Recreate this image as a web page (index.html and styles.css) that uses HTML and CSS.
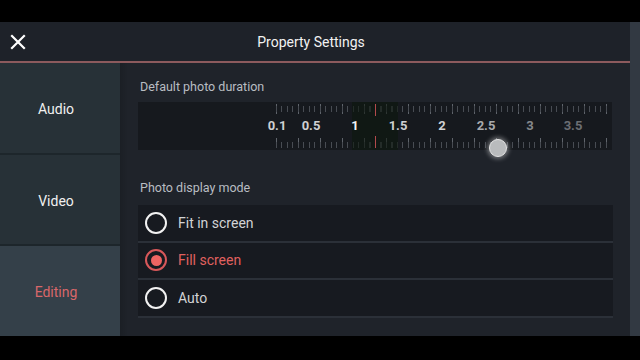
FILE: index.html
```html
<!DOCTYPE html>
<html>
<head>
<meta charset="utf-8">
<link rel="stylesheet" href="styles.css">
</head>
<body>
<div class="topbar"></div>
<div class="frame">
  <div class="panel">
    <header class="header">
      <svg class="close" width="16" height="16" viewBox="0 0 16 16"><path d="M2 2L14 14M14 2L2 14" stroke="#ffffff" stroke-width="2.2" stroke-linecap="square"/></svg>
      <div class="title">Property Settings</div>
    </header>
    <div class="body">
      <nav class="sidebar">
        <div class="tab">Audio</div>
        <div class="tab">Video</div>
        <div class="tab active">Editing</div>
      </nav>
      <main class="content">
        <div class="label">Default photo duration</div>
        <div class="ruler">
          <div class="ticks top"></div>
          <div class="ticks bottom"></div>
          <div class="hl"></div>
          <div class="center top-c"></div>
          <div class="center bot-c"></div>
          <span class="num n1" style="left:139px">0.1</span>
          <span class="num n1" style="left:173px">0.5</span>
          <span class="num n0" style="left:217px">1</span>
          <span class="num n1" style="left:260px">1.5</span>
          <span class="num n1" style="left:304px">2</span>
          <span class="num n2" style="left:348px">2.5</span>
          <span class="num n3" style="left:392px">3</span>
          <span class="num n4" style="left:435px">3.5</span>
          <div class="thumb"></div>
        </div>
        <div class="label label2">Photo display mode</div>
        <div class="options">
          <div class="opt"><span class="radio"></span><span>Fit in screen</span></div>
          <div class="opt sel"><span class="radio"></span><span>Fill screen</span></div>
          <div class="opt"><span class="radio"></span><span>Auto</span></div>
        </div>
      </main>
    </div>
  </div>
  <div class="strip"></div>
</div>
</body>
</html>
```

FILE: styles.css
```css
html, body {
  margin: 0;
  padding: 0;
  background: #000;
  width: 640px;
  height: 360px;
  overflow: hidden;
  font-family: Roboto, "Liberation Sans", sans-serif;
}
.topbar { height: 22px; background: #000; }
.frame {
  display: flex;
  height: 314px;
}
.panel {
  width: 630px;
  display: flex;
  flex-direction: column;
  background: #1f232a;
}
.strip {
  width: 10px;
  background: #323942;
}
.header {
  height: 39px;
  border-bottom: 2px solid #8c5a5d;
  background: #1e2229;
  display: flex;
  align-items: center;
  position: relative;
}
.close {
  margin-left: 10px;
  margin-top: 1px;
}
.title {
  flex: 1;
  text-align: center;
  color: #f2f2f2;
  font-size: 14px;
  padding-right: 34px;
  padding-top: 1px;
}
.body {
  flex: 1;
  display: flex;
}
.sidebar {
  width: 120px;
  display: flex;
  flex-direction: column;
  background: #1d262b;
  gap: 2px;
}
.tab {
  flex: 1 1 0;
  box-sizing: border-box;
  background: #273137;
  color: #f0f0f0;
  font-size: 14px;
  display: flex;
  align-items: center;
  justify-content: center;
  padding-right: 8px;
  padding-top: 2px;
}
.tab.active {
  background: #344049;
  color: #d8676a;
}
.content {
  flex: 1;
  padding: 16px 17px 0 18px;
  background: linear-gradient(to right, #1b1f25 0, #1f232a 8px);
}
.label {
  color: #b9bdc2;
  font-size: 12.5px;
  padding-left: 2px;
  height: 18px;
}
.ruler {
  margin-top: 5px;
  width: 474px;
  height: 48px;
  background: #16191e;
  position: relative;
}
.ticks {
  position: absolute;
  left: 138px;
  right: 2px;
  height: 10px;
  background-image: repeating-linear-gradient(to right, #5f646b 0 1px, transparent 1px 22px);
}
.ticks::before {
  content: "";
  position: absolute;
  left: 0; right: 0;
  height: 6px;
  background-image: repeating-linear-gradient(to right, #484c53 0 1px, transparent 1px 5.5px);
}
.ticks.top { top: 2px; }
.ticks.top::before { top: 2px; }
.ticks.bottom { bottom: 2px; }
.ticks.bottom::before { bottom: 0; }
.hl {
  position: absolute;
  left: 214px;
  width: 46px;
  top: 0;
  bottom: 0;
  background: rgba(14, 24, 14, 0.6);
}
.center {
  position: absolute;
  left: 237px;
  width: 1px;
  height: 12px;
  background: #b34a4c;
}
.top-c { top: 2px; }
.bot-c { bottom: 2px; }
.num {
  position: absolute;
  top: 17px;
  font-size: 13px;
  font-weight: bold;
  line-height: 14px;
  transform: translateX(-50%);
}
.n0 { color: #f4f4f4; }
.n1 { color: #cfd0d2; }
.n2 { color: #a8aaad; }
.n3 { color: #85888c; }
.n4 { color: #6b6e73; }
.thumb {
  position: absolute;
  left: 351px;
  top: 37px;
  width: 18px;
  height: 18px;
  border-radius: 50%;
  background: #b9bbbd;
  border: 1px solid #e4e4e4;
  box-sizing: border-box;
  box-shadow: 0 0 4px 2px rgba(255,255,255,0.35);
}
.label2 {
  margin-top: 30px;
  height: 18px;
}
.options {
  width: 475px;
  display: flex;
  flex-direction: column;
  gap: 2px;
  margin-top: 7px;
  background: #2b3038;
  padding-bottom: 2px;
}
.opt {
  height: 35.5px;
  background: #171a20;
  display: flex;
  align-items: center;
  color: #d2d3d5;
  font-size: 14px;
}
.radio {
  width: 18px;
  height: 18px;
  border: 2px solid #f2f2f2;
  border-radius: 50%;
  margin-left: 7px;
  margin-right: 11px;
  position: relative;
}
.opt.sel { color: #e0615f; }
.opt.sel .radio {
  border-color: #d9585a;
}
.opt.sel .radio::after {
  content: "";
  position: absolute;
  left: 3.5px;
  top: 3.5px;
  width: 11px;
  height: 11px;
  border-radius: 50%;
  background: #f06462;
}
```
